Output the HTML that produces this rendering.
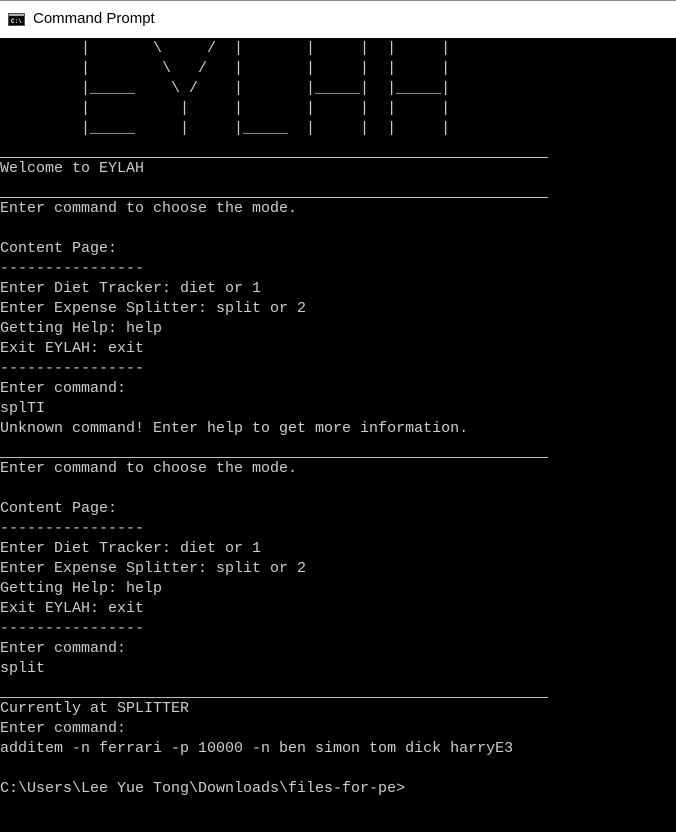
<!DOCTYPE html>
<html><head><meta charset="utf-8"><style>
html,body{margin:0;padding:0;width:676px;height:832px;overflow:hidden;background:#000}
#title{position:absolute;left:0;top:0;width:676px;height:38px;background:#fff;border-top:1px solid #888;box-sizing:border-box}
#title span{position:absolute;left:33px;top:9px;font:15px "Liberation Sans",sans-serif;color:#000}
#icon{position:absolute;left:8px;top:12px;width:17px;height:13px;background:#000;border:1px solid #555;box-sizing:border-box}
#icon i{position:absolute;left:0;top:0;width:15px;height:2px;background:#aaa}
#icon b{position:absolute;left:2px;top:4px;font:bold 6px "Liberation Mono",monospace;color:#fff}
pre{position:absolute;left:0;top:39px;margin:0;font:15px/20px "Liberation Mono",monospace;color:#cccccc}
.r{height:18px;width:548px;border-bottom:1px solid #c0c0c0;margin-bottom:1px}
</style></head><body>
<div id="title"><div id="icon"><i></i><b>C:\</b></div><span>Command Prompt</span></div>
<pre>         |       \     /  |       |     |  |     |
         |        \   /   |       |     |  |     |
         |_____    \ /    |       |_____|  |_____|
         |          |     |       |     |  |     |
         |_____     |     |_____  |     |  |     |
<div class="r"></div>Welcome to EYLAH
<div class="r"></div>Enter command to choose the mode.

Content Page:
----------------
Enter Diet Tracker: diet or 1
Enter Expense Splitter: split or 2
Getting Help: help
Exit EYLAH: exit
----------------
Enter command:
splTI
Unknown command! Enter help to get more information.
<div class="r"></div>Enter command to choose the mode.

Content Page:
----------------
Enter Diet Tracker: diet or 1
Enter Expense Splitter: split or 2
Getting Help: help
Exit EYLAH: exit
----------------
Enter command:
split
<div class="r"></div>Currently at SPLITTER
Enter command:
additem -n ferrari -p 10000 -n ben simon tom dick harryE3

C:\Users\Lee Yue Tong\Downloads\files-for-pe&gt;</pre>
</body></html>
